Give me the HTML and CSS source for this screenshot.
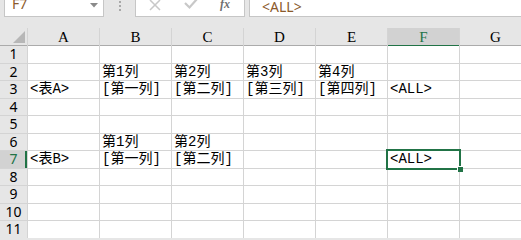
FILE: index.html
```html
<!DOCTYPE html>
<html lang="en">
<head>
    <meta charset="UTF-8">
    <title>Sheet1</title>
    <link rel="stylesheet" href="styles.css">
</head>
<body>
<div class="formula-bar">
    <div class="name-box">
        <span>F7</span>
        <svg class="drop" width="8" height="5" viewBox="0 0 8 5"><path d="M0 0h8L4 4.5z" fill="#8a8a8a"/></svg>
    </div>
    <div class="grip"><i></i><i></i><i></i></div>
    <div class="fx-buttons">
        <svg width="14" height="12" viewBox="0 0 14 12"><path d="M2 0l10 10M12 0L2 10" stroke="#c8c8c8" stroke-width="1.5" fill="none"/></svg>
        <svg width="16" height="12" viewBox="0 0 16 12"><path d="M2 3l4.5 4.5L14 -1" stroke="#c8c8c8" stroke-width="2.2" fill="none"/></svg>
        <span class="fx">fx</span>
    </div>
    <div class="formula-input">&lt;ALL&gt;</div>
</div>

<div class="sheet">
    <div class="corner"><span></span></div>
    <div class="col-head">A</div>
    <div class="col-head">B</div>
    <div class="col-head">C</div>
    <div class="col-head">D</div>
    <div class="col-head">E</div>
    <div class="col-head active">F</div>
    <div class="col-head">G</div>

    <div class="row-head">1</div>
    <div class="cell"></div><div class="cell"></div><div class="cell"></div><div class="cell"></div><div class="cell"></div><div class="cell"></div><div class="cell"></div>

    <div class="row-head">2</div>
    <div class="cell"></div><div class="cell">第1列</div><div class="cell">第2列</div><div class="cell">第3列</div><div class="cell">第4列</div><div class="cell"></div><div class="cell"></div>

    <div class="row-head">3</div>
    <div class="cell">&lt;表A&gt;</div><div class="cell">[第一列]</div><div class="cell">[第二列]</div><div class="cell">[第三列]</div><div class="cell">[第四列]</div><div class="cell">&lt;ALL&gt;</div><div class="cell"></div>

    <div class="row-head">4</div>
    <div class="cell"></div><div class="cell"></div><div class="cell"></div><div class="cell"></div><div class="cell"></div><div class="cell"></div><div class="cell"></div>

    <div class="row-head">5</div>
    <div class="cell"></div><div class="cell"></div><div class="cell"></div><div class="cell"></div><div class="cell"></div><div class="cell"></div><div class="cell"></div>

    <div class="row-head">6</div>
    <div class="cell"></div><div class="cell">第1列</div><div class="cell">第2列</div><div class="cell"></div><div class="cell"></div><div class="cell"></div><div class="cell"></div>

    <div class="row-head active">7</div>
    <div class="cell">&lt;表B&gt;</div><div class="cell">[第一列]</div><div class="cell">[第二列]</div><div class="cell"></div><div class="cell"></div><div class="cell selected">&lt;ALL&gt;</div><div class="cell"></div>

    <div class="row-head">8</div>
    <div class="cell"></div><div class="cell"></div><div class="cell"></div><div class="cell"></div><div class="cell"></div><div class="cell"></div><div class="cell"></div>

    <div class="row-head">9</div>
    <div class="cell"></div><div class="cell"></div><div class="cell"></div><div class="cell"></div><div class="cell"></div><div class="cell"></div><div class="cell"></div>

    <div class="row-head">10</div>
    <div class="cell"></div><div class="cell"></div><div class="cell"></div><div class="cell"></div><div class="cell"></div><div class="cell"></div><div class="cell"></div>

    <div class="row-head">11</div>
    <div class="cell"></div><div class="cell"></div><div class="cell"></div><div class="cell"></div><div class="cell"></div><div class="cell"></div><div class="cell"></div>
</div>
</body>
</html>
```

FILE: styles.css
```css
body {
    margin: 0;
    width: 521px;
    height: 240px;
    overflow: hidden;
    background: #e6e6e6;
    font-family: "Liberation Mono", "Noto Sans CJK SC", monospace;
    font-size: 14px;
}

/* formula bar */
.formula-bar {
    display: flex;
    height: 17px;
    margin-bottom: 11px;
    background: #e6e6e6;
}

.name-box {
    width: 100px;
    margin-left: 4px;
    background: white;
    border: 1px solid #c6c6c6;
    border-top: none;
    display: flex;
    justify-content: space-between;
    align-items: flex-start;
    box-sizing: border-box;
    overflow: hidden;
}

.name-box span {
    font-family: "Noto Sans", sans-serif;
    font-size: 14px;
    line-height: 14px;
    margin-top: -3px;
    padding-left: 7px;
    color: #8b5a2b;
}

.name-box .drop {
    margin: 3px 5px 0 0;
}

.grip {
    width: 31px;
    display: flex;
    flex-direction: column;
    align-items: center;
    gap: 2px;
    padding-top: 1px;
}

.grip i {
    width: 2px;
    height: 2px;
    background: #a8a8a8;
}

.fx-buttons {
    width: 110px;
    background: white;
    border: 1px solid #c6c6c6;
    border-top: none;
    box-sizing: border-box;
    display: flex;
    align-items: flex-start;
    gap: 21px;
    padding-left: 12px;
    overflow: hidden;
}

.fx {
    font-family: "Liberation Serif", serif;
    font-style: italic;
    font-weight: bold;
    font-size: 12px;
    line-height: 12px;
    margin-top: -2px;
    color: #707070;
}

.formula-input {
    flex: 1;
    margin-left: 4px;
    background: white;
    border: 1px solid #c6c6c6;
    border-top: none;
    border-right: none;
    font-family: "Noto Sans", sans-serif;
    font-size: 14px;
    line-height: 14px;
    padding-left: 12px;
    color: #8b5a2b;
    overflow: hidden;
}

.formula-input::first-line {
    line-height: 14px;
}

/* sheet grid */
.sheet {
    display: grid;
    grid-template-columns: 27px repeat(7, 71px);
    grid-template-rows: 17px 17px 16px 17px 16px 17px 16px 17px 16px 17px 16px 17px;
    gap: 1px;
    background: #d4d4d4;
}

.corner {
    background: #e6e6e6;
    position: relative;
    box-shadow: 0 1px 0 #ababab;
}

.corner span {
    position: absolute;
    right: 2px;
    bottom: 2px;
    width: 12px;
    height: 12px;
    background: #b7b7b7;
    clip-path: polygon(100% 0, 100% 100%, 0 100%);
}

.col-head {
    background: #e6e6e6;
    text-align: center;
    font-family: "Liberation Serif", "Noto Sans CJK SC", serif;
    font-size: 15px;
    line-height: 18px;
    box-shadow: 0 1px 0 #ababab;
}

.col-head.active {
    background: #d2d2d2;
    color: #217346;
    box-shadow: 0 1px 0 #217346, 0 2px 0 #217346;
}

.row-head {
    background: #e6e6e6;
    text-align: center;
    font-family: "Noto Sans", sans-serif;
    font-size: 14px;
    line-height: 16px;
    overflow: hidden;
}

.row-head.active {
    background: #d2d2d2;
    color: #217346;
    box-shadow: inset -2px 0 0 #217346;
}

.cell {
    background: white;
    padding-left: 2px;
    line-height: 16px;
    white-space: nowrap;
}

.cell.selected {
    position: relative;
}

.cell.selected::before {
    content: "";
    position: absolute;
    left: -2px;
    top: -2px;
    right: -2px;
    bottom: -2px;
    border: 2px solid #217346;
}

.cell.selected::after {
    content: "";
    position: absolute;
    right: -4px;
    bottom: -4px;
    width: 5px;
    height: 5px;
    background: #217346;
    border: 1px solid white;
    border-right: none;
    border-bottom: none;
}
```
